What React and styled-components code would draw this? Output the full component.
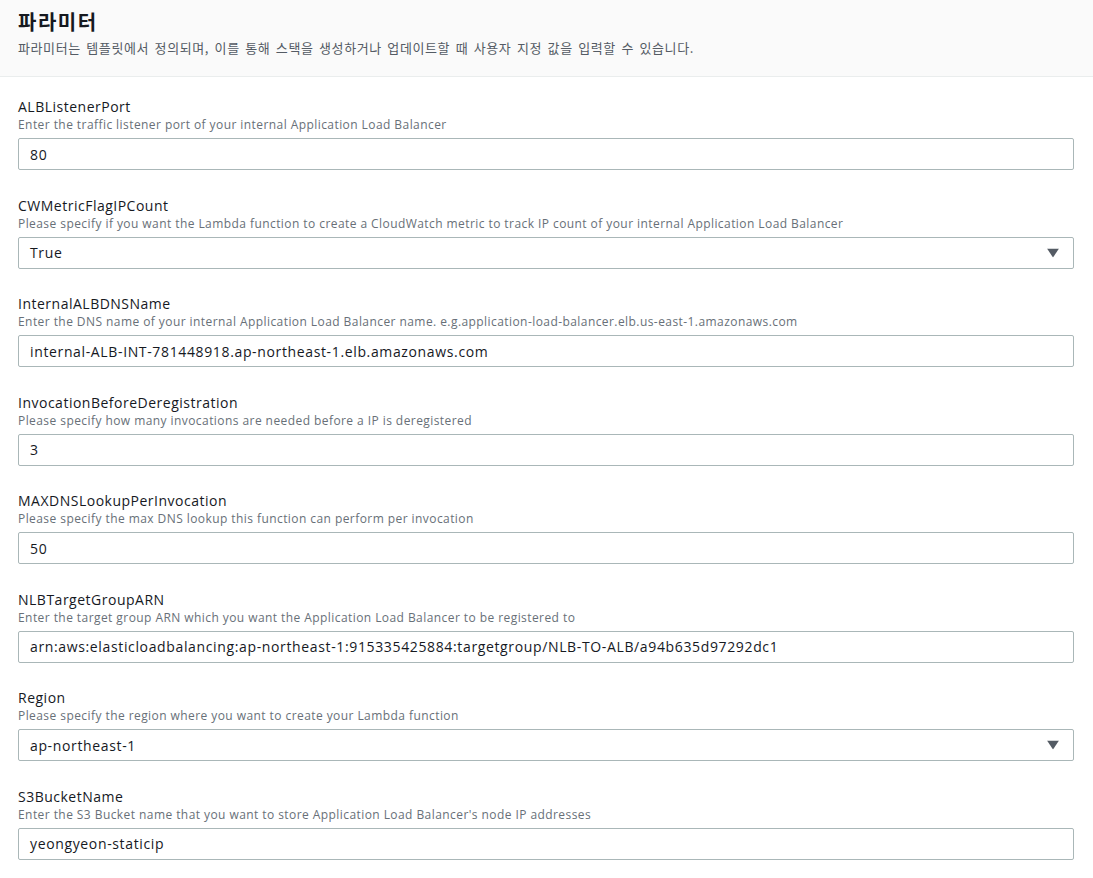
import React from "react";
import styled, { createGlobalStyle } from "styled-components";

const GlobalStyle = createGlobalStyle`
  html, body { margin: 0; padding: 0; background: #ffffff; }
  body {
    font-family: "Open Sans", "Noto Sans CJK KR", sans-serif;
    color: #16191f;
  }
  * { box-sizing: border-box; }
`;

const Page = styled.div`
  width: 1093px;
  min-height: 878px;
  background: #ffffff;
`;

const Header = styled.header`
  background: #fafafa;
  border-bottom: 1px solid #eaeded;
  padding: 10px 18px 19px;
`;

const Title = styled.h2`
  margin: 0;
  font-family: "Noto Sans CJK KR", sans-serif;
  font-size: 20px;
  font-weight: 700;
  line-height: 24px;
  letter-spacing: 1.5px;
  color: #16191f;
`;

const HeaderDesc = styled.p`
  margin: 5px 0 0;
  font-family: "Noto Sans CJK KR", sans-serif;
  font-size: 13px;
  line-height: 18px;
  letter-spacing: 0.6px;
  word-spacing: 2px;
  color: #545b64;
`;

const Form = styled.div`
  display: flex;
  flex-direction: column;
  gap: 25.55px;
  padding: 20px 19px 0 18px;
`;

const Field = styled.div`
  display: flex;
  flex-direction: column;
`;

const Label = styled.label`
  font-size: 14px;
  line-height: 20px;
  letter-spacing: 0.5px;
  color: #16191f;
`;

const Desc = styled.div`
  font-size: 12px;
  line-height: 16px;
  letter-spacing: 0.43px;
  color: #687078;
  margin-bottom: 5px;
`;

const Box = styled.div`
  position: relative;
  height: 32px;
  border: 1px solid #aab7b8;
  border-radius: 2px;
  background: #ffffff;
  display: flex;
  align-items: center;
  padding: 0 ${(p) => (p.$select ? "40px" : "11px")} 0 11px;
  font-size: 14px;
  letter-spacing: 0.64px;
  color: #16191f;
`;

const Caret = styled.svg`
  position: absolute;
  right: 14px;
  top: 50%;
  transform: translateY(-50%);
`;

const fields = [
  {
    label: "ALBListenerPort",
    desc: "Enter the traffic listener port of your internal Application Load Balancer",
    value: "80",
  },
  {
    label: "CWMetricFlagIPCount",
    desc: "Please specify if you want the Lambda function to create a CloudWatch metric to track IP count of your internal Application Load Balancer",
    value: "True",
    select: true,
  },
  {
    label: "InternalALBDNSName",
    desc: "Enter the DNS name of your internal Application Load Balancer name. e.g.application-load-balancer.elb.us-east-1.amazonaws.com",
    value: "internal-ALB-INT-781448918.ap-northeast-1.elb.amazonaws.com",
  },
  {
    label: "InvocationBeforeDeregistration",
    desc: "Please specify how many invocations are needed before a IP is deregistered",
    value: "3",
  },
  {
    label: "MAXDNSLookupPerInvocation",
    desc: "Please specify the max DNS lookup this function can perform per invocation",
    value: "50",
  },
  {
    label: "NLBTargetGroupARN",
    desc: "Enter the target group ARN which you want the Application Load Balancer to be registered to",
    value: "arn:aws:elasticloadbalancing:ap-northeast-1:915335425884:targetgroup/NLB-TO-ALB/a94b635d97292dc1",
  },
  {
    label: "Region",
    desc: "Please specify the region where you want to create your Lambda function",
    value: "ap-northeast-1",
    select: true,
  },
  {
    label: "S3BucketName",
    desc: "Enter the S3 Bucket name that you want to store Application Load Balancer's node IP addresses",
    value: "yeongyeon-staticip",
  },
];

export default function App() {
  return (
    <Page>
      <GlobalStyle />
      <Header>
        <Title>파라미터</Title>
        <HeaderDesc>
          파라미터는 템플릿에서 정의되며, 이를 통해 스택을 생성하거나 업데이트할 때 사용자 지정 값을 입력할 수 있습니다.
        </HeaderDesc>
      </Header>
      <Form>
        {fields.map((f) => (
          <Field key={f.label}>
            <Label>{f.label}</Label>
            <Desc>{f.desc}</Desc>
            <Box $select={f.select}>
              {f.value}
              {f.select && (
                <Caret width="12" height="9" viewBox="0 0 12 9">
                  <path d="M0 0 L12 0 L6 9 Z" fill="#545b64" />
                </Caret>
              )}
            </Box>
          </Field>
        ))}
      </Form>
    </Page>
  );
}
